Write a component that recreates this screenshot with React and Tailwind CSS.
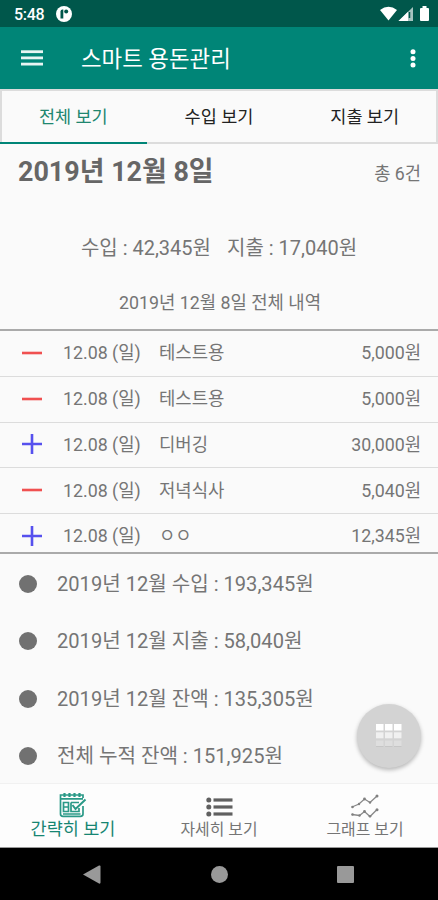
import React from "react";

const ENTRIES = [
  { id: 1, type: "minus", date: "12.08 (일)", label: "테스트용", amount: "5,000원" },
  { id: 2, type: "minus", date: "12.08 (일)", label: "테스트용", amount: "5,000원" },
  { id: 3, type: "plus", date: "12.08 (일)", label: "디버깅", amount: "30,000원" },
  { id: 4, type: "minus", date: "12.08 (일)", label: "저녁식사", amount: "5,040원" },
  { id: 5, type: "plus", date: "12.08 (일)", label: "ㅇㅇ", amount: "12,345원" },
];

const SUMMARY = [
  "2019년 12월 수입 : 193,345원",
  "2019년 12월 지출 : 58,040원",
  "2019년 12월 잔액 : 135,305원",
  "전체 누적 잔액 : 151,925원",
];

function StatusBar() {
  return (
    <div className="flex h-[27px] shrink-0 items-center bg-[#00574b] pl-[14px] pr-[8px] text-white">
      <span className="w-[42px] pt-[2px] text-[16px] font-medium leading-[27px] tracking-[-0.3px]">5:48</span>
      <svg width="16" height="16" viewBox="0 0 16 16" className="mt-px">
        <circle cx="8" cy="8" r="8" fill="#fff" />
        <path d="M4.500 12.500V5.500Q4.500 3.500 6.500 3.500H7.300V12.500Z" fill="#00574b" />
        <circle cx="10.200" cy="5.400" r="2" fill="#00574b" />
      </svg>
      <svg width="50" height="16" viewBox="0 0 50 16" className="ml-auto">
        <path d="M0 4Q8.500-2.500 17 4L8.500 14.500Z" fill="#fff" />
        <path d="M18.500 15L33 1V15Z" fill="#fff" fillOpacity=".65" />
        <path d="M18.500 15L28 5.800V15Z" fill="#fff" />
        <path d="M29.500 6V12" stroke="#00574b" strokeWidth="1.500" />
        <path d="M40 3Q40 2 41 2H42.500V0H46.500V2H48Q49 2 49 3V14Q49 15 48 15H41Q40 15 40 14Z" fill="#fff" />
      </svg>
    </div>
  );
}

function AppBar() {
  return (
    <header className="flex h-[62px] shrink-0 items-center bg-[#008577] pl-[21px] pr-[22px] text-white">
      <svg width="22" height="16" viewBox="0 0 22 16" fill="#e8f5f3">
        <rect width="22" height="2.800" y=".3" />
        <rect width="22" height="2.800" y="6.500" />
        <rect width="22" height="2.800" y="12.700" />
      </svg>
      <h1 className="ml-[38px] pt-[2px] text-[22.4px] font-normal leading-[30px]">스마트 용돈관리</h1>
      <svg width="6" height="20" viewBox="0 0 6 20" fill="#fff" className="ml-auto">
        <circle cx="3" cy="3.700" r="2.500" />
        <circle cx="3" cy="10.500" r="2.500" />
        <circle cx="3" cy="17.100" r="2.500" />
      </svg>
    </header>
  );
}

function Tabs() {
  return (
    <nav className="grid h-[55px] shrink-0 grid-cols-3 border-2 border-[#dcdcdc] text-center text-[17.5px] leading-[53px] text-[#222]">
      <div className="-mb-[2px] -ml-[2px] h-[53px] border-b-2 border-[#008577] text-[#20866f]">전체 보기</div>
      <div className="h-[51px]">수입 보기</div>
      <div className="h-[51px] pl-[2px]">지출 보기</div>
    </nav>
  );
}

function Sign({ type }) {
  return (
    <svg width="20" height="20" viewBox="0 0 20 20" fill="none" strokeWidth="2.600" className="mt-[-1px]">
      {type === "plus" ? (
        <path d="M0 10H20M10 0V20" stroke="#5650ee" />
      ) : (
        <path d="M0 10H20" stroke="#f05050" />
      )}
    </svg>
  );
}

function EntryList() {
  return (
    <ul className="h-[225px] shrink-0 overflow-hidden border-y-2 border-[#aaa]">
      {ENTRIES.map((e) => (
        <li
          key={e.id}
          className="flex h-[45.75px] items-center border-b border-[#dcdcdc] pl-[22px] pr-[17px] text-[17.8px] leading-[26px]"
        >
          <Sign type={e.type} />
          <span className="ml-[21px] w-[96px]">{e.date}</span>
          <span>{e.label}</span>
          <span className="ml-auto">{e.amount}</span>
        </li>
      ))}
    </ul>
  );
}

function KeypadButton() {
  return (
    <button className="absolute right-[17px] top-[150px] flex size-[64px] items-center justify-center rounded-full bg-[#d3d3d3] shadow-[0_2px_4px_rgba(0,0,0,0.28)]">
      <svg width="26" height="24" viewBox="0 0 26 24">
        {[0, 9, 18].map((x) => (
          <g key={x}>
            <rect x={x} y="0" width="7.500" height="6.500" fill="#fff" />
            <rect x={x} y="8.300" width="7.500" height="6" fill="#f0f0f0" />
            <rect x={x} y="16.500" width="7.500" height="5.500" fill="#dedede" />
            <rect x={x} y="22" width="7.500" height="1" fill="#c6c6c6" />
          </g>
        ))}
      </svg>
    </button>
  );
}

function CalendarIcon() {
  return (
    <svg width="28" height="26" viewBox="0 0 28 26" fill="none" stroke="#2a9987" strokeWidth="1.700">
      <path d="M24 6V3H1.500V22Q1.500 24.300 4 24.300H21.500Q24 24.300 24 22V14" />
      <path d="M1.500 6.800H24M4 22H21.500" />
      <path d="M5.500 1V5M10.500 1V5M15.500 1V5M20.500 1V5" strokeWidth="2.200" />
      <path d="M4.500 10.500H9.500V19.500H4.500ZM4.500 15H9.500M12 10.500H20M12 10.500V19.500H20V16" />
      <path d="M13.500 13L16.500 17L26.500 7.500" strokeWidth="2" />
    </svg>
  );
}

function ListIcon() {
  return (
    <svg width="27" height="20" viewBox="0 0 27 20" fill="#606060">
      {[3, 10, 17].map((y) => (
        <g key={y}>
          <circle cx="2.800" cy={y} r="2.500" />
          <rect x="7.500" y={y - 1.6} width="19" height="3.200" />
        </g>
      ))}
    </svg>
  );
}

function GraphIcon() {
  return (
    <svg width="28" height="24" viewBox="0 0 28 24" fill="none" stroke="#888" strokeWidth="1.300">
      <path d="M1 13L8 10L13.500 5L19 8.500L26 2" />
      <path d="M1 20.500L8.500 21.500L13.500 17.500L19 22.500L26 15.500" />
      <g fill="#808080" stroke="none">
        <circle cx="1.500" cy="13" r="1.300" />
        <circle cx="8" cy="10" r="1.200" />
        <circle cx="13.500" cy="5" r="1.400" />
        <circle cx="19" cy="8.500" r="1.200" />
        <circle cx="26" cy="2" r="1.500" />
        <circle cx="1.500" cy="20.500" r="1.300" />
        <circle cx="8.500" cy="21.500" r="1.200" />
        <circle cx="13.500" cy="17.500" r="1.400" />
        <circle cx="19" cy="22.300" r="1.300" />
        <circle cx="26" cy="15.800" r="1.500" />
      </g>
    </svg>
  );
}

function BottomNav() {
  return (
    <nav className="grid h-[65px] shrink-0 grid-cols-3 border-b border-t border-b-[#999] border-t-[#f1f1f1] bg-[#fdfdfd] text-[15.9px] leading-[20px] text-[#757575]">
      <div className="flex flex-col items-center pt-[8px] text-[17.5px] text-[#168572]">
        <CalendarIcon />
        <span className="mt-px">간략히 보기</span>
      </div>
      <div className="flex flex-col items-center pt-[13px]">
        <ListIcon />
        <span className="mt-[3px]">자세히 보기</span>
      </div>
      <div className="flex flex-col items-center pt-[10px]">
        <GraphIcon />
        <span className="mt-[2px]">그래프 보기</span>
      </div>
    </nav>
  );
}

function SystemNav() {
  return (
    <div className="flex h-[53px] shrink-0 items-center bg-black pl-[83px] pr-[84px]">
      <svg width="18" height="19" viewBox="0 0 18 19" fill="#999">
        <path d="M0 9.500L16 .5Q17.500 0 17.500 1.500V17.500Q17.500 19 16 18.500Z" />
      </svg>
      <span className="mx-auto size-[17px] rounded-full bg-[#999]" />
      <span className="size-[17px] rounded-[1px] bg-[#999]" />
    </div>
  );
}

export default function App() {
  return (
    <div className="flex h-[900px] w-[438px] flex-col overflow-hidden bg-[#fafafa] font-[Roboto,'Noto_Sans_CJK_KR',sans-serif] text-[#757575]">
      <StatusBar />
      <AppBar />
      <Tabs />
      <section className="flex h-[185px] shrink-0 flex-col">
        <div className="flex items-center justify-between pl-[18px] pr-[17px] pt-[10px]">
          <h2 className="text-[26.9px] font-bold leading-[36px] text-[#666]">2019년 12월 8일</h2>
          <span className="pt-[4px] text-[17.7px] leading-[26px]">총 6건</span>
        </div>
        <div className="mt-[43px] flex justify-center gap-[16px] text-[20px] leading-[30px]">
          <span>수입 : 42,345원</span>
          <span>지출 : 17,040원</span>
        </div>
        <p className="mt-[27px] pl-[2px] text-center text-[17.8px] leading-[26px]">2019년 12월 8일 전체 내역</p>
      </section>
      <EntryList />
      <section className="relative h-[229px] shrink-0 pt-px">
        {SUMMARY.map((text) => (
          <div key={text} className="flex h-[57.5px] items-center pl-[19px]">
            <span className="size-[18px] rounded-full bg-[#717171]" />
            <span className="ml-[20px] text-[20.1px] leading-[30px]">{text}</span>
          </div>
        ))}
        <KeypadButton />
      </section>
      <BottomNav />
      <SystemNav />
    </div>
  );
}
